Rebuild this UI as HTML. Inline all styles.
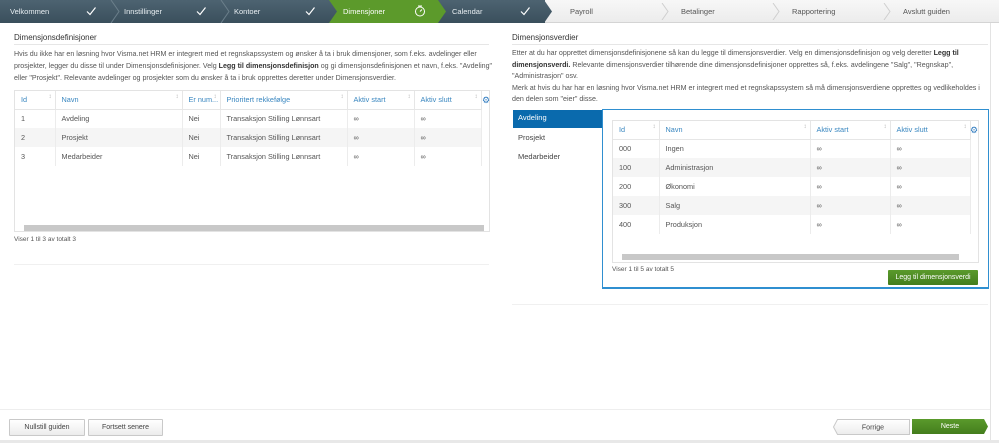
<!DOCTYPE html>
<html><head><meta charset="utf-8"><style>
*{box-sizing:border-box;margin:0;padding:0}
body{width:999px;height:443px;background:#fff;font-family:"Liberation Sans",sans-serif;font-size:7.5px;color:#444;position:relative;overflow:hidden}
.a{position:absolute}
.nav{left:0;top:0;width:999px;height:23px;background:linear-gradient(#f7f7f7,#ececec);border-bottom:1px solid #d4d4d4}
.seg{position:absolute;top:0;height:23px;font-size:7.5px;line-height:23px;padding-left:10px}
.done{background:linear-gradient(#4d6371,#3a4f5c);color:#e8eef2;clip-path:polygon(0 0,calc(100% - 8px) 0,100% 50%,calc(100% - 8px) 100%,0 100%)}
.cur{background:#5c9a2b;color:#fff;clip-path:polygon(0 0,calc(100% - 8px) 0,100% 50%,calc(100% - 8px) 100%,0 100%)}
.fut{color:#555}
.sep{position:absolute;top:3px;width:8px;height:17px}
.chk{position:absolute;top:6px;right:22px;width:10px;height:10px}
h3{font-size:8px;font-weight:normal;color:#333}
.line{height:1px;background:#e6e6e6}
p{font-size:7.1px;line-height:12px;color:#555}
table{border-collapse:collapse;font-size:7.3px;table-layout:fixed}
th{color:#3a87c0;font-weight:normal;text-align:left;padding-left:6px;height:18px;border-right:1px solid #e6e6e6;border-bottom:1px solid #e6e6e6;background:#fff;position:relative}
th::after{content:"\2195";position:absolute;right:3px;top:3px;font-size:6px;color:#aaa}
td{padding-left:6px;height:19px;border-right:1px solid #ececec;color:#555}
tr.g td{background:#f5f5f5}
.grid{border:1px solid #e3e3e3;background:#fff}
.sb{background:#c8c8c8;height:6px}
.btn{border:1px solid #c9c9c9;background:linear-gradient(#fff,#ececec);font-size:7px;color:#444;text-align:center;line-height:15px;border-radius:1px}
</style></head><body>
<div class="a nav">
 <div class="a" style="left:0;top:0;width:545px;height:23px;background:linear-gradient(#4d6371,#3a4f5c)"></div>
 <div class="seg done" style="left:0;width:118px;z-index:9">Velkommen<svg class="chk" viewBox="0 0 10 10"><path d="M1 5.5l3 3 5.5-7" stroke="#fff" fill="none" stroke-width="1.2"/></svg></div>
 <svg class="a" style="left:110px;top:0;z-index:10" width="10" height="23" viewBox="0 0 10 23"><path d="M1 0l8 11.5L1 23" stroke="#6b7f8b" fill="none"/></svg>
 <div class="seg done" style="left:110px;width:118px;padding-left:14px;z-index:8">Innstillinger<svg class="chk" viewBox="0 0 10 10"><path d="M1 5.5l3 3 5.5-7" stroke="#fff" fill="none" stroke-width="1.2"/></svg></div>
 <svg class="a" style="left:220px;top:0;z-index:10" width="10" height="23" viewBox="0 0 10 23"><path d="M1 0l8 11.5L1 23" stroke="#6b7f8b" fill="none"/></svg>
 <div class="seg done" style="left:220px;width:117px;padding-left:14px;z-index:7">Kontoer<svg class="chk" viewBox="0 0 10 10"><path d="M1 5.5l3 3 5.5-7" stroke="#fff" fill="none" stroke-width="1.2"/></svg></div>
 <div class="seg cur" style="left:329px;width:117px;padding-left:14px;z-index:6">Dimensjoner<svg class="chk" style="top:5px;width:12px;height:12px;right:20px" viewBox="0 0 12 12"><circle cx="6" cy="6.5" r="4.5" stroke="#fff" fill="none" stroke-width="1"/><path d="M6 6.5l2-2M4 1h4" stroke="#fff" stroke-width="1"/></svg></div>
 <div class="seg done" style="left:438px;width:114px;padding-left:14px;z-index:5">Calendar<svg class="chk" viewBox="0 0 10 10"><path d="M1 5.5l3 3 5.5-7" stroke="#fff" fill="none" stroke-width="1.2"/></svg></div>
 <div class="seg fut" style="left:560px">Payroll</div>
 <div class="seg fut" style="left:671px">Betalinger</div>
 <div class="seg fut" style="left:782px">Rapportering</div>
 <div class="seg fut" style="left:893px">Avslutt guiden</div>
 <svg class="sep" style="left:661px" viewBox="0 0 8 17"><path d="M1 0l6 8.5-6 8.5" stroke="#cfcfcf" fill="none"/></svg>
 <svg class="sep" style="left:772px" viewBox="0 0 8 17"><path d="M1 0l6 8.5-6 8.5" stroke="#cfcfcf" fill="none"/></svg>
 <svg class="sep" style="left:883px" viewBox="0 0 8 17"><path d="M1 0l6 8.5-6 8.5" stroke="#cfcfcf" fill="none"/></svg>
</div>
<div class="a" style="left:990px;top:23px;width:1px;height:420px;background:#e3e3e3"></div>

<h3 class="a" style="left:14px;top:33px">Dimensjonsdefinisjoner</h3>
<div class="a line" style="left:14px;top:44px;width:475px"></div>
<p class="a" style="left:14px;top:48px;width:482px">Hvis du ikke har en løsning hvor Visma.net HRM er integrert med et regnskapssystem og ønsker å ta i bruk dimensjoner, som f.eks. avdelinger eller prosjekter, legger du disse til under Dimensjonsdefinisjoner. Velg <b style="color:#333">Legg til dimensjonsdefinisjon</b> og gi dimensjonsdefinisjonen et navn, f.eks. "Avdeling" eller "Prosjekt". Relevante avdelinger og prosjekter som du ønsker å ta i bruk opprettes deretter under Dimensjonsverdier.</p>
<div class="a grid" style="left:14px;top:90px;width:476px;height:142px">
<table style="width:466px"><colgroup><col style="width:40px"><col style="width:127px"><col style="width:38px"><col style="width:127px"><col style="width:67px"><col style="width:67px"></colgroup>
<tr><th>Id</th><th>Navn</th><th>Er num...</th><th>Prioritert rekkefølge</th><th>Aktiv start</th><th>Aktiv slutt</th></tr>
<tr><td>1</td><td>Avdeling</td><td>Nei</td><td>Transaksjon Stilling Lønnsart</td><td>∞</td><td>∞</td></tr>
<tr class="g"><td>2</td><td>Prosjekt</td><td>Nei</td><td>Transaksjon Stilling Lønnsart</td><td>∞</td><td>∞</td></tr>
<tr><td>3</td><td>Medarbeider</td><td>Nei</td><td>Transaksjon Stilling Lønnsart</td><td>∞</td><td>∞</td></tr>
</table>
<div class="a" style="left:467px;top:4px;color:#2f7bbf;font-size:9px">⚙</div>
<div class="a sb" style="left:9px;top:134px;width:460px"></div>
</div>
<div class="a" style="left:14px;top:236px;font-size:6.5px;color:#555">Viser 1 til 3 av totalt 3</div>
<div class="a line" style="left:14px;top:264px;width:475px;background:#f0f0f0"></div>

<h3 class="a" style="left:512px;top:33px">Dimensjonsverdier</h3>
<div class="a line" style="left:512px;top:44px;width:476px"></div>
<p class="a" style="left:512px;top:48px;width:478px;line-height:11.5px">Etter at du har opprettet dimensjonsdefinisjonene så kan du legge til dimensjonsverdier. Velg en dimensjonsdefinisjon og velg deretter <b style="color:#333">Legg til dimensjonsverdi.</b> Relevante dimensjonsverdier tilhørende dine dimensjonsdefinisjoner opprettes så, f.eks. avdelingene "Salg", "Regnskap", "Administrasjon" osv.<br>Merk at hvis du har har en løsning hvor Visma.net HRM er integrert med et regnskapssystem så må dimensjonsverdiene opprettes og vedlikeholdes i den delen som "eier" disse.</p>
<div class="a" style="left:513px;top:110px;width:90px;height:18px;background:#0a6aad;color:#fff;font-size:7.5px;line-height:16px;padding-left:5px">Avdeling</div>
<div class="a" style="left:518px;top:133px;font-size:7.5px">Prosjekt</div>
<div class="a" style="left:518px;top:152px;font-size:7.5px">Medarbeider</div>
<div class="a" style="left:602px;top:109px;width:387px;height:180px;border:1px solid #2f8fd0;border-bottom-width:2px"></div>
<div class="a grid" style="left:612px;top:120px;width:367px;height:143px">
<table style="width:357px"><colgroup><col style="width:46px"><col style="width:151px"><col style="width:80px"><col style="width:80px"></colgroup>
<tr><th>Id</th><th>Navn</th><th>Aktiv start</th><th>Aktiv slutt</th></tr>
<tr><td>000</td><td>Ingen</td><td>∞</td><td>∞</td></tr>
<tr class="g"><td>100</td><td>Administrasjon</td><td>∞</td><td>∞</td></tr>
<tr><td>200</td><td>Økonomi</td><td>∞</td><td>∞</td></tr>
<tr class="g"><td>300</td><td>Salg</td><td>∞</td><td>∞</td></tr>
<tr><td>400</td><td>Produksjon</td><td>∞</td><td>∞</td></tr>
</table>
<div class="a" style="left:357px;top:4px;color:#2f7bbf;font-size:9px">⚙</div>
<div class="a sb" style="left:9px;top:133px;width:337px"></div>
</div>
<div class="a" style="left:612px;top:266px;font-size:6.5px;color:#555">Viser 1 til 5 av totalt 5</div>
<div class="a" style="left:888px;top:270px;width:90px;height:15px;background:linear-gradient(#5a9a2c,#447d1d);color:#fff;font-size:7px;text-align:center;line-height:15px;border-radius:1px">Legg til dimensjonsverdi</div>
<div class="a line" style="left:512px;top:304px;width:476px;background:#f0f0f0"></div>

<div class="a line" style="left:0;top:409px;width:990px;background:#eee"></div>
<div class="a btn" style="left:9px;top:419px;width:76px">Nullstill guiden</div>
<div class="a btn" style="left:88px;top:419px;width:75px">Fortsett senere</div>
<svg class="a" style="left:833px;top:419px" width="77" height="16" viewBox="0 0 77 16"><defs><linearGradient id="g" x1="0" y1="0" x2="0" y2="1"><stop offset="0" stop-color="#fff"/><stop offset="1" stop-color="#ececec"/></linearGradient></defs><path d="M4.5 .5H76.5V15.5H4.5L.5 8Z" fill="url(#g)" stroke="#c9c9c9"/><text x="40" y="10.5" font-size="7" fill="#444" text-anchor="middle" font-family="Liberation Sans">Forrige</text></svg>
<div class="a" style="left:912px;top:419px;width:76px;height:15px;background:linear-gradient(#5a9a2c,#447d1d);color:#fff;font-size:7px;text-align:center;line-height:15px;clip-path:polygon(0 0,72px 0,100% 50%,72px 100%,0 100%)">Neste</div>
<div class="a line" style="left:0;top:440px;width:999px;background:#e8e8e8;height:3px"></div>
</body></html>
